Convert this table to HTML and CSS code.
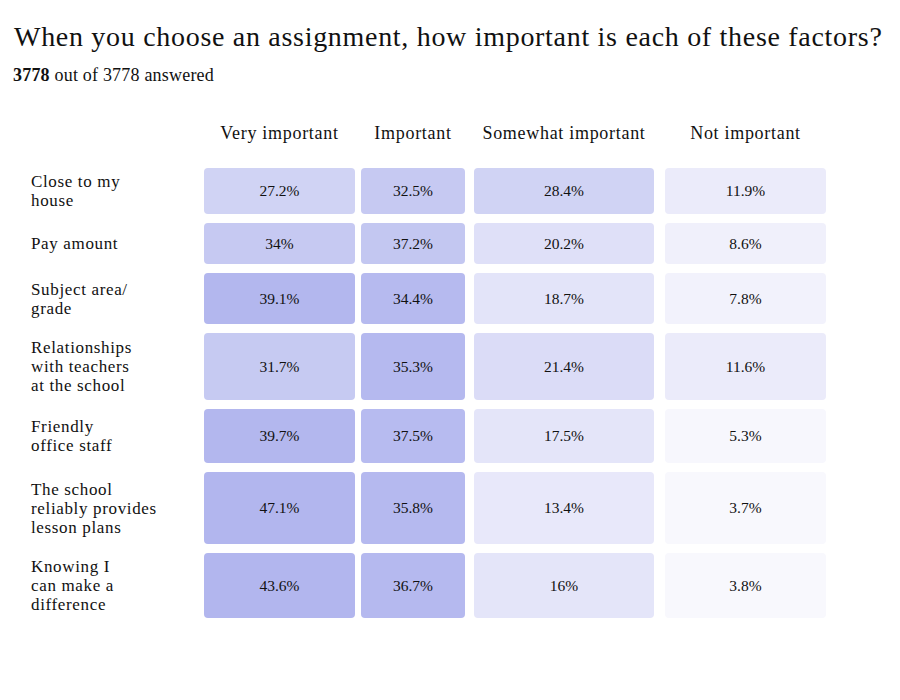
FILE: index.html
```html
<!DOCTYPE html>
<html lang="en">
<head>
<meta charset="utf-8">
<title>Assignment factors</title>
<link rel="stylesheet" href="styles.css">
</head>
<body>
<main class="page">
  <h1 class="title">When you choose an assignment, how important is each of these factors?</h1>
  <p class="count"><b>3778</b> out of 3778 answered</p>

  <div class="table">
    <div class="hd"></div>
    <div class="hd v">Very important</div>
    <div class="hd i">Important</div>
    <div class="hd s">Somewhat important</div>
    <div class="hd n">Not important</div>

    <div class="label">Close to my<br>house</div>
    <div class="cell v" style="background:#d0d3f4">27.2%</div>
    <div class="cell i" style="background:#c6c9f2">32.5%</div>
    <div class="cell s" style="background:#d0d3f4">28.4%</div>
    <div class="cell n" style="background:#ebebfa">11.9%</div>

    <div class="label">Pay amount</div>
    <div class="cell v" style="background:#c6c9f2">34%</div>
    <div class="cell i" style="background:#c3c7f1">37.2%</div>
    <div class="cell s" style="background:#dfe0f8">20.2%</div>
    <div class="cell n" style="background:#f0f0fb">8.6%</div>

    <div class="label">Subject area/<br>grade</div>
    <div class="cell v" style="background:#b3b7ee">39.1%</div>
    <div class="cell i" style="background:#b6baef">34.4%</div>
    <div class="cell s" style="background:#e3e4f9">18.7%</div>
    <div class="cell n" style="background:#f2f2fc">7.8%</div>

    <div class="label">Relationships<br>with teachers<br>at the school</div>
    <div class="cell v" style="background:#c6caf2">31.7%</div>
    <div class="cell i" style="background:#b5b9ef">35.3%</div>
    <div class="cell s" style="background:#dbdcf7">21.4%</div>
    <div class="cell n" style="background:#ebebfa">11.6%</div>

    <div class="label">Friendly<br>office staff</div>
    <div class="cell v" style="background:#b3b7ee">39.7%</div>
    <div class="cell i" style="background:#b7bbf0">37.5%</div>
    <div class="cell s" style="background:#e4e5f9">17.5%</div>
    <div class="cell n" style="background:#f7f7fd">5.3%</div>

    <div class="label">The school<br>reliably provides<br>lesson plans</div>
    <div class="cell v" style="background:#b2b6ee">47.1%</div>
    <div class="cell i" style="background:#b5b9ef">35.8%</div>
    <div class="cell s" style="background:#e8e8fa">13.4%</div>
    <div class="cell n" style="background:#f8f8fd">3.7%</div>

    <div class="label">Knowing I<br>can make a<br>difference</div>
    <div class="cell v" style="background:#b2b6ee">43.6%</div>
    <div class="cell i" style="background:#b5b9ef">36.7%</div>
    <div class="cell s" style="background:#e4e5f9">16%</div>
    <div class="cell n" style="background:#f8f8fd">3.8%</div>
  </div>
</main>
</body>
</html>
```
FILE: styles.css
```css
* { box-sizing: border-box; }
html, body { margin: 0; background: #fff; }
body {
  font-family: "Liberation Serif", "Times New Roman", serif;
  color: #111;
}
.page {
  padding: 21px 0 0 14px;
  width: 900px;
}
.title {
  margin: 0;
  font-size: 28px;
  font-weight: 400;
  line-height: 32px;
  letter-spacing: 0.7px;
  white-space: nowrap;
}
.count {
  margin: 11px 0 0 -1px;
  font-size: 18px;
  line-height: 22px;
  letter-spacing: 0.2px;
}
.count b { font-weight: 700; }

.table {
  margin: 36px 0 0 17px;
  display: grid;
  grid-template-columns: 173px 157px 113px 191px 161px;
  grid-template-rows: 37px 46px 41px 51px 67px 54px 72px 65px;
  row-gap: 9px;
}
.hd {
  align-self: start;
  font-size: 18px;
  line-height: 22px;
  letter-spacing: 0.7px;
  text-align: center;
  white-space: nowrap;
}
.label {
  font-size: 17px;
  line-height: 19px;
  letter-spacing: 0.65px;
  align-self: center;
  color: #111;
}
.cell {
  display: flex;
  align-items: center;
  justify-content: center;
  border-radius: 4px;
  font-size: 15.5px;
  color: #111;
}
.v { margin-right: 6px; }
.i { margin-right: 9px; }
.s { margin-right: 11px; }
```
